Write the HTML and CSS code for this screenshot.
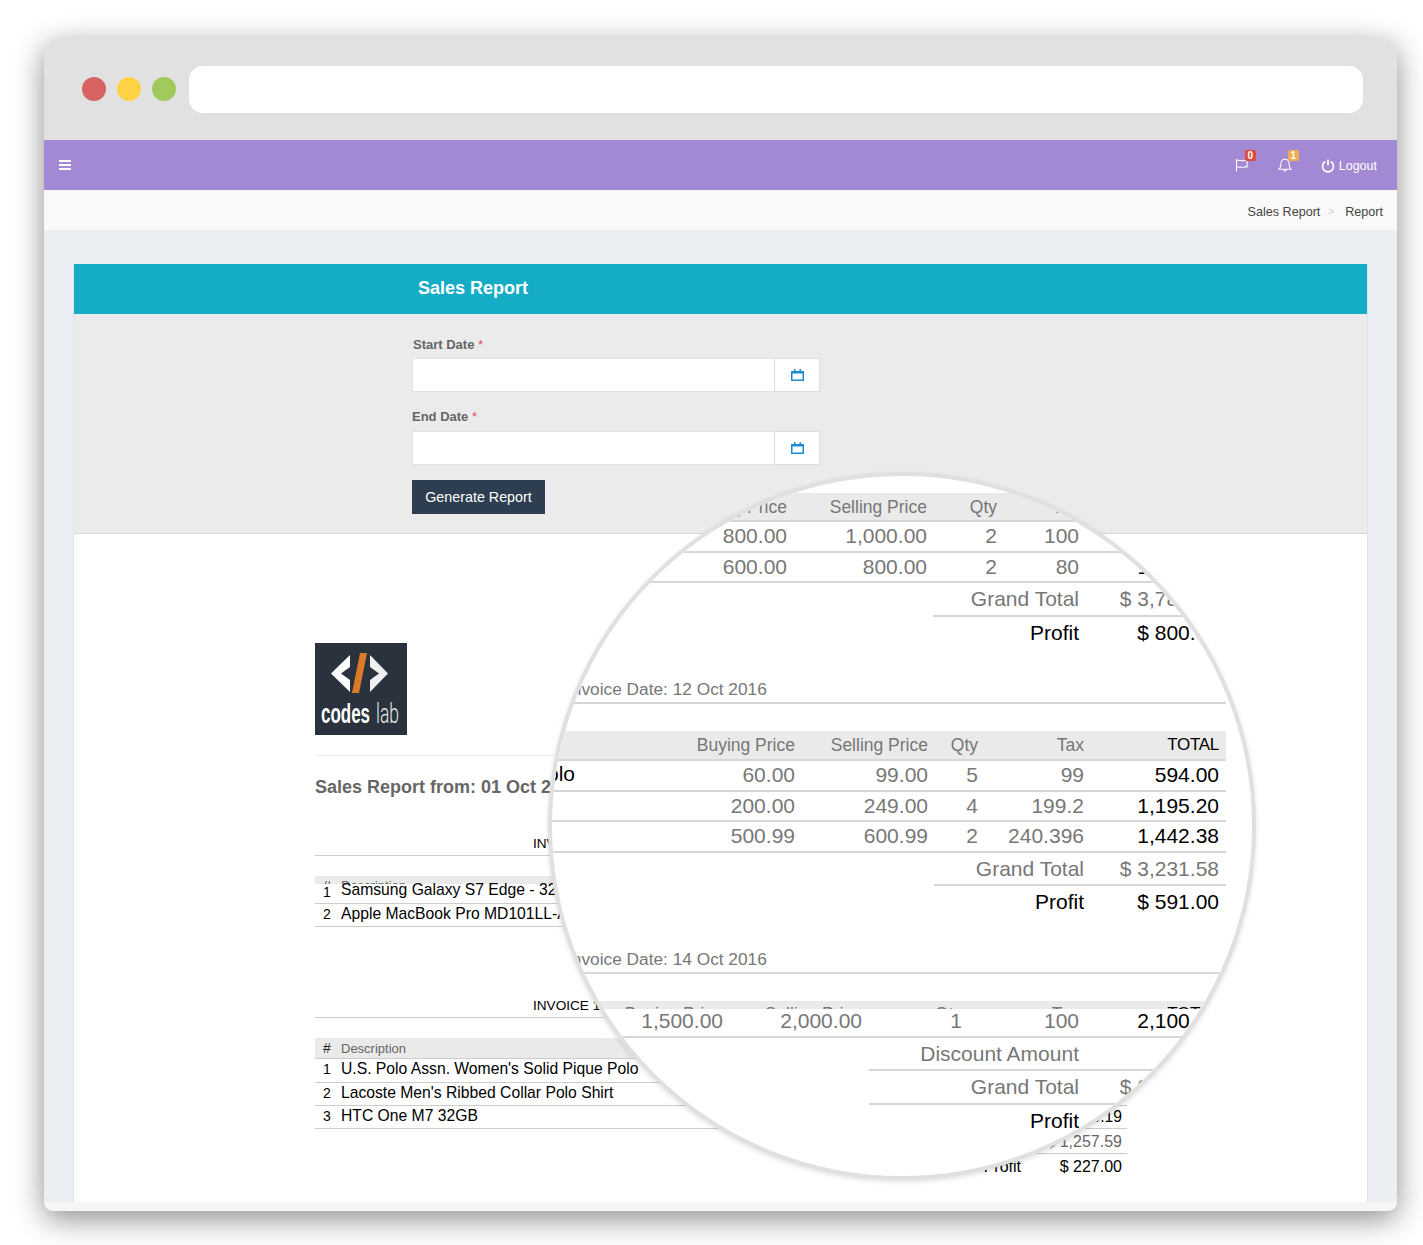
FILE: index.html
```html
<!DOCTYPE html>
<html lang="en">
<head>
<meta charset="UTF-8" />
<title>Sales Report</title>
<link rel="stylesheet" href="styles.css">
</head>
<body>

<div class="window">

  <!-- browser chrome -->
  <div class="chrome">
    <span class="dot dot-red"></span>
    <span class="dot dot-yellow"></span>
    <span class="dot dot-green"></span>
    <div class="urlbar"></div>
  </div>

  <!-- top nav -->
  <div class="navbar">
    <svg class="burger" width="12" height="10" viewBox="0 0 12 10"><path d="M0 1h12M0 5h12M0 9h12" stroke="#fff" stroke-width="2"/></svg>
    <div class="nav-right">
      <div class="nav-icon">
        <svg width="14" height="14" viewBox="0 0 14 14" fill="none" stroke="#fff" stroke-width="1.1"><path d="M1.500 1v12.500"/><path d="M1.500 2.500c3-1.200 4.500 1 7 .3 1.200-.3 2.500-.5 3.500-.3v6.500c-1.500-.5-2.500.2-4 .3-2.300.2-3.800-1-6.500.2"/></svg>
        <span class="badge badge-red">0</span>
      </div>
      <div class="nav-icon nav-bell">
        <svg width="14" height="14" viewBox="0 0 14 14" fill="none" stroke="#fff" stroke-width="1.1"><path d="M7 1.200c-2.600 0-4 2-4 4.300 0 3-.8 4.500-2 5.800h12c-1.200-1.300-2-2.800-2-5.800 0-2.300-1.400-4.300-4-4.300z"/><path d="M5.500 11.500c0 2 3 2 3 0"/></svg>
        <span class="badge badge-orange">1</span>
      </div>
      <div class="logout">
        <svg width="14" height="14" viewBox="0 0 14 14" fill="none" stroke="#fff" stroke-width="1.700"><path d="M4.300 2.600a5.500 5.500 0 1 0 5.400 0"/><path d="M7 .6v6"/></svg>
        <span>Logout</span>
      </div>
    </div>
  </div>

  <div class="breadcrumb">
    <span>Sales Report</span>
    <span class="crumb-sep">&gt;</span>
    <span>Report</span>
  </div>

  <div class="content">
    <div class="card">
      <div class="card-head">Sales Report</div>

      <form class="form-panel" onsubmit="return false;">
        <label class="field-label field-start">Start Date <i>*</i></label>
        <div class="input-group">
          <input type="text" />
          <span class="addon">
            <svg width="13" height="12" viewBox="0 0 13 12"><path d="M0 2h13v10H0z" fill="#1a8ccf"/><path d="M3 0h1.500v3H3zM8.500 0H10v3H8.500z" fill="#1a8ccf"/><path d="M1.500 4.500h10v6h-10z" fill="#fff"/></svg>
          </span>
        </div>
        <label class="field-label field-end">End Date <i>*</i></label>
        <div class="input-group">
          <input type="text" />
          <span class="addon">
            <svg width="13" height="12" viewBox="0 0 13 12"><path d="M0 2h13v10H0z" fill="#1a8ccf"/><path d="M3 0h1.500v3H3zM8.500 0H10v3H8.500z" fill="#1a8ccf"/><path d="M1.500 4.500h10v6h-10z" fill="#fff"/></svg>
          </span>
        </div>
        <button type="submit" class="btn">Generate Report</button>
      </form>

      <div class="report">
        <svg class="logo" width="92" height="92" viewBox="0 0 92 92">
          <rect width="92" height="92" fill="#2a323d"/>
          <path d="M35 12v12l-9 6.500 9 6.500v12L16 30.500z" fill="#fff"/>
          <path d="M55 12v12l9 6.500-9 6.500v12l18-18.500z" fill="#f0f0f0"/>
          <path d="M45 10h7l-8 40h-7z" fill="#dc7a2a"/>
          <text x="6" y="80" class="logo-bold" textLength="49" lengthAdjust="spacingAndGlyphs">codes</text>
          <text x="61" y="80" class="logo-thin" textLength="23" lengthAdjust="spacingAndGlyphs">lab</text>
        </svg>
        <hr class="rule" />
        <h3 class="report-title">Sales Report from: 01 Oct 2016 to 31 Oct 2016</h3>

        <div class="inv-line">INVOICE 1001</div>
        <div class="mini-head mini-head-cut"><span>#</span><em>Description</em></div>
        <div class="mini-row mini-row-first"><span>1</span><b>Samsung Galaxy S7 Edge - 32GB</b></div>
        <div class="mini-row"><span>2</span><b>Apple MacBook Pro MD101LL-A</b></div>

        <div class="inv-line inv-line-2">INVOICE 1002</div>
        <div class="mini-head"><span>#</span><em>Description</em></div>
        <div class="mini-row mini-row-c"><span>1</span><b>U.S. Polo Assn. Women's Solid Pique Polo</b></div>
        <div class="mini-row"><span>2</span><b>Lacoste Men's Ribbed Collar Polo Shirt</b></div>
        <div class="mini-row"><span>3</span><b>HTC One M7 32GB</b><strong>$ 1,030.19</strong></div>
        <div class="mini-sum mini-sum-line"><span>Grand Total</span><b>$ 1,257.59</b></div>
        <div class="mini-sum mini-sum-profit"><span>Profit</span><b>$ 227.00</b></div>
      </div>
    </div>
  </div>

  <div class="window-foot"></div>

  <!-- magnifier over the report -->
  <div class="lens">
    <div class="lens-inner">

      <div class="grid grid-a grid-head">
        <span></span><span>Buying Price</span><span>Selling Price</span><span>Qty</span><span>Tax</span><span class="dark">TOTAL</span>
      </div>
      <div class="grid grid-a grid-row">
        <span></span><span>800.00</span><span>1,000.00</span><span>2</span><span>100</span><span class="dark">2,100.00</span>
      </div>
      <div class="grid grid-a grid-row">
        <span></span><span>600.00</span><span>800.00</span><span>2</span><span>80</span><span class="dark">1,680.00</span>
      </div>
      <div class="sum sum-a sum-line"><span>Grand Total</span><span>$ 3,780.00</span></div>
      <div class="sum sum-a sum-dark"><span>Profit</span><span>$ 800.00</span></div>

      <div class="inv-date">Invoice Date: 12 Oct 2016</div>

      <div class="grid grid-b grid-head">
        <span></span><span>Buying Price</span><span>Selling Price</span><span>Qty</span><span>Tax</span><span class="dark">TOTAL</span>
      </div>
      <div class="grid grid-b grid-row">
        <span class="desc">U.S. Polo Assn. Women's Solid Pique Polo</span><span>60.00</span><span>99.00</span><span>5</span><span>99</span><span class="dark">594.00</span>
      </div>
      <div class="grid grid-b grid-row">
        <span></span><span>200.00</span><span>249.00</span><span>4</span><span>199.2</span><span class="dark">1,195.20</span>
      </div>
      <div class="grid grid-b grid-row">
        <span></span><span>500.99</span><span>600.99</span><span>2</span><span>240.396</span><span class="dark">1,442.38</span>
      </div>
      <div class="sum sum-b sum-line"><span>Grand Total</span><span>$ 3,231.58</span></div>
      <div class="sum sum-b sum-dark"><span>Profit</span><span>$ 591.00</span></div>

      <div class="inv-date">Invoice Date: 14 Oct 2016</div>

      <div class="grid grid-c grid-head grid-head-cut">
        <span></span><span>Buying Price</span><span>Selling Price</span><span>Qty</span><span>Tax</span><span class="dark">TOTAL</span>
      </div>
      <div class="grid grid-c grid-row grid-row-c">
        <span></span><span>1,500.00</span><span>2,000.00</span><span>1</span><span>100</span><span class="dark">2,100.00</span>
      </div>
      <div class="sum sum-c sum-line"><span>Discount Amount</span><span>0.00</span></div>
      <div class="sum sum-c sum-line"><span>Grand Total</span><span>$ 2,100.00</span></div>
      <div class="sum sum-c sum-dark"><span>Profit</span><span>$ 500.00</span></div>

    </div>
  </div>

</div>

</body>
</html>
```

FILE: styles.css
```css
* {
  box-sizing: border-box;
}
html, body {
  margin: 0;
  height: 1245px;
  overflow: hidden;
  background: #fff;
}
body {
  font-family: "Liberation Sans", Arial, sans-serif;
  padding: 38px 26px 34px 44px;
}

.window {
  position: relative;
  width: 1353px;
  height: 1173px;
  display: flex;
  flex-direction: column;
  border-radius: 16px 16px 10px 10px;
  box-shadow: 0 8px 30px rgba(0,0,0,0.45);
  background: #f6f6f6;
}

/* browser chrome */
.chrome {
  height: 102px;
  flex: none;
  background: #e1e1e1;
  border-radius: 16px 16px 0 0;
  display: flex;
  align-items: center;
  padding: 0 34px 0 38px;
  gap: 11px;
}
.dot {
  width: 24px;
  height: 24px;
  border-radius: 50%;
  flex: none;
}
.dot-red { background: #d66262; }
.dot-yellow { background: #ffd246; }
.dot-green { background: #a0ca5b; }
.urlbar {
  flex: 1;
  height: 47px;
  margin-left: 2px;
  background: #fff;
  border-radius: 14px;
}

/* nav */
.navbar {
  height: 50px;
  flex: none;
  background: #a389d4;
  display: flex;
  align-items: center;
  justify-content: space-between;
  padding: 0 20px 0 15px;
  color: #fff;
}
.burger {
  display: block;
}
.nav-right {
  display: flex;
  align-items: center;
}
.nav-icon {
  position: relative;
  height: 14px;
  margin-right: 29px;
}
.nav-icon svg {
  display: block;
}
.badge {
  position: absolute;
  top: -8px;
  left: 10px;
  width: 11px;
  height: 11px;
  border-radius: 2px;
  font-size: 10px;
  font-weight: bold;
  line-height: 11px;
  text-align: center;
  color: #fff;
}
.badge-red { background: #e04b3c; }
.badge-orange { background: #f0ad4e; }
.logout {
  display: flex;
  align-items: center;
  gap: 4px;
  padding-top: 1px;
  font-size: 12.500px;
}

.breadcrumb {
  height: 40px;
  flex: none;
  background: #f9f9f9;
  display: flex;
  align-items: center;
  justify-content: flex-end;
  gap: 8px;
  padding: 3px 14px 0 0;
  font-size: 12.600px;
  color: #444;
}
.crumb-sep {
  color: #ccc;
  font-size: 10px;
  margin-right: 3px;
}

/* content */
.content {
  flex: 1;
  min-height: 0;
  background: #ebeef3;
  padding: 34px 30px 0;
}
.card {
  height: 100%;
  background: #fff;
  box-shadow: 1px 0 0 #dfe2e6, -1px 0 0 #dfe2e6;
  overflow: hidden;
}
.card-head {
  height: 50px;
  background: #15acc5;
  color: #fff;
  font-size: 18px;
  font-weight: bold;
  line-height: 48px;
  padding-left: 344px;
}
.form-panel {
  height: 220px;
  background: #ebebeb;
  border-bottom: 1px solid #d4d4d4;
  padding: 22px 0 0 338px;
}
.field-label {
  display: block;
  height: 17px;
  font-size: 13px;
  font-weight: bold;
  line-height: 17px;
  color: #666;
}
.field-label i {
  color: #e05050;
  font-style: normal;
  font-weight: normal;
}
.field-start {
  margin-left: 1px;
  margin-bottom: 5px;
}
.field-end {
  margin-top: 16px;
  margin-bottom: 6px;
}
.input-group {
  display: flex;
  width: 408px;
  height: 34px;
}
.input-group input {
  flex: 1;
  min-width: 0;
  height: 34px;
  border: 1px solid #e2e2e2;
  border-right: none;
  background: #fff;
  padding: 0 8px;
}
.addon {
  width: 46px;
  flex: none;
  background: #fff;
  border: 1px solid #d9dee6;
  display: flex;
  align-items: center;
  justify-content: center;
}
.btn {
  display: block;
  margin-top: 15px;
  width: 133px;
  height: 34px;
  border: none;
  background: #2c3e50;
  color: #fff;
  font-family: inherit;
  font-size: 14.300px;
}

/* report under the lens */
.report {
  width: 812px;
  margin-left: 241px;
  padding-top: 109px;
}
.logo {
  display: block;
}
.logo-bold {
  font-family: "Liberation Sans", sans-serif;
  font-size: 27px;
  font-weight: bold;
  fill: #fff;
}
.logo-thin {
  font-family: Roboto, sans-serif;
  font-size: 27px;
  font-weight: 300;
  fill: #e8e8e8;
}
.rule {
  height: 1px;
  margin: 20px 0 0;
  border: none;
  background: #eee;
}
.report-title {
  margin: 21px 0 0;
  font-size: 18px;
  line-height: 20px;
  font-weight: bold;
  color: #666;
  white-space: nowrap;
}
.inv-line {
  margin-top: 37px;
  height: 22px;
  padding-left: 218px;
  border-bottom: 1px solid #ccc;
  font-size: 13.600px;
  line-height: 20px;
  color: #000;
}
.inv-line-2 {
  margin-top: 69px;
}
.mini-head {
  display: flex;
  height: 21px;
  margin-top: 20px;
  background: #eaeaea;
  border-bottom: 1px solid #ccc;
  font-size: 14px;
  line-height: 21px;
  color: #222;
}
.mini-head span {
  width: 26px;
  padding-left: 8px;
  flex: none;
}
.mini-head em {
  font-style: normal;
  font-size: 13px;
  color: #666;
}
.mini-head-cut {
  height: 8px;
  border-bottom: none;
  overflow: hidden;
  line-height: 20px;
}
.mini-row {
  display: flex;
  height: 23px;
  background: #fff;
  border-bottom: 1px solid #ccc;
  color: #000;
  font-size: 15.700px;
  line-height: 18px;
}
.mini-row span {
  width: 26px;
  flex: none;
  padding: 1px 0 0 8px;
  font-size: 14px;
}
.mini-row b {
  flex: 1;
  padding-top: 1px;
  font-weight: normal;
  white-space: nowrap;
}
.mini-row strong {
  font-weight: normal;
  padding: 2px 5px 0 0;
}
.mini-row-first {
  height: 20px;
  line-height: 11px;
}
.mini-row-first span {
  padding-top: 0;
  line-height: 16px;
}
.mini-row-first b {
  padding-top: 0;
}
.mini-row-c {
  height: 24px;
}
.mini-sum {
  display: flex;
  justify-content: flex-end;
  height: 25px;
  margin-left: 620px;
  padding-right: 5px;
  font-size: 16px;
  line-height: 25px;
}
.mini-sum span {
  flex: 1;
  text-align: right;
}
.mini-sum b {
  width: 101px;
  flex: none;
  font-weight: normal;
  text-align: right;
}
.mini-sum-line {
  border-bottom: 1px solid #ccc;
  color: #666;
}
.mini-sum-profit {
  color: #000;
}
.window-foot {
  height: 9px;
  flex: none;
  background: #f6f6f6;
  border-radius: 0 0 10px 10px;
}

/* magnifier */
.lens {
  position: absolute;
  left: 504px;
  top: 434px;
  width: 708px;
  height: 708px;
  border: 4px solid #e0e0e0;
  border-radius: 50%;
  background: #fff;
  overflow: hidden;
  box-shadow: 0 2px 5px rgba(0,0,0,0.12);
}
.lens-inner {
  padding: 17px 26px 0 0;
  color: #777;
  font-size: 21px;
}
.grid {
  display: grid;
  text-align: right;
  white-space: nowrap;
}
.grid-a { grid-template-columns: 1fr 140px 70px 82px 140px; }
.grid-a > span:first-child { display: none; }
.grid-b { grid-template-columns: 23px 1fr 133px 50px 106px 135px; }
.grid-c { grid-template-columns: 1fr 139px 100px 117px 140px; }
.grid-c > span:first-child { display: none; }
.grid-head {
  height: 29px;
  padding-right: 7px;
  background: #eaeaea;
  border-bottom: 2px solid #d6d6d6;
  font-size: 17.500px;
  line-height: 28px;
}
.grid-head .dark {
  font-size: 17px;
  letter-spacing: -0.3px;
}
.grid-b.grid-head {
  height: 30px;
}
.grid-head-cut {
  height: 8px;
  border-bottom: none;
  overflow: hidden;
  line-height: 26px;
}
.grid-row {
  height: 30.500px;
  padding-right: 7px;
  border-bottom: 2px solid #d6d6d6;
  line-height: 28px;
}
.grid-row-c {
  height: 29px;
  line-height: 23px;
  margin-right: -26px;
  padding-right: 33px;
}
.dark {
  color: #000;
}
.desc {
  justify-self: end;
  color: #000;
  margin-top: -1px;
}
.sum {
  display: flex;
  justify-content: flex-end;
  padding-right: 7px;
  height: 33.500px;
  line-height: 32px;
  white-space: nowrap;
}
.sum span:first-child {
  flex: 1;
  text-align: right;
}
.sum span:last-child {
  flex: none;
  text-align: right;
}
.sum-a {
  margin-left: 381px;
}
.sum-a span:last-child {
  width: 140px;
}
.sum-b {
  margin-left: 382px;
}
.sum-b span:last-child {
  width: 135px;
}
.sum-c {
  margin-left: 317px;
}
.sum-c span:last-child {
  width: 140px;
}
.sum-line {
  border-bottom: 2px solid #d6d6d6;
}
.sum-dark {
  color: #000;
}
.inv-date {
  height: 54px;
  margin-bottom: 27px;
  padding: 28px 0 0 15px;
  border-bottom: 2px solid #d6d6d6;
  font-size: 17.300px;
  line-height: 22px;
}
```
